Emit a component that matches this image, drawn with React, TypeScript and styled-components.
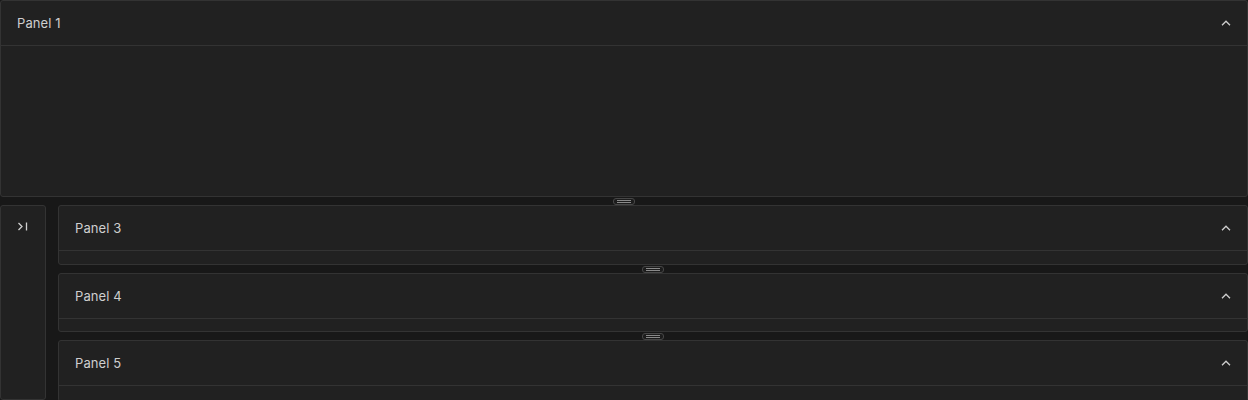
import React from "react";
import styled, { createGlobalStyle } from "styled-components";

const GlobalStyle = createGlobalStyle`
  html, body {
    margin: 0;
    padding: 0;
    background: #181818;
    font-family: Inter, "Noto Sans", sans-serif;
  }
`;

const Page = styled.div`
  width: 1248px;
  height: 400px;
  overflow: hidden;
  display: flex;
  flex-direction: column;
`;

const Panel = styled.div<{ $height: number }>`
  height: ${(p) => p.$height}px;
  flex-shrink: 0;
  box-sizing: border-box;
  background: #212121;
  border: 1px solid #333333;
  border-radius: 3px;
  overflow: hidden;
  display: flex;
  flex-direction: column;
`;

const Header = styled.div`
  height: 44px;
  flex-shrink: 0;
  display: flex;
  align-items: center;
  justify-content: space-between;
  padding: 0 16px;
  border-bottom: 1px solid #333333;
  color: #cfcfcf;
  font-size: 13px;
  letter-spacing: 0.1px;
`;

const Handle = styled.div`
  height: 8px;
  flex-shrink: 0;
  display: flex;
  align-items: center;
  justify-content: center;
`;

const Grip = styled.div`
  width: 20px;
  height: 5px;
  border: 1px solid #474747;
  border-radius: 3px;
  background: #1c1c1c;
  display: flex;
  flex-direction: column;
  justify-content: center;
  align-items: center;
  gap: 1px;

  span {
    width: 14px;
    height: 1px;
    background: #8a8a8a;
  }
`;

const Row = styled.div`
  flex: 1;
  display: flex;
  gap: 12px;
  min-height: 0;
`;

const Sidebar = styled.div`
  width: 46px;
  flex-shrink: 0;
  box-sizing: border-box;
  background: #212121;
  border: 1px solid #333333;
  border-radius: 3px;
  display: flex;
  justify-content: center;
  padding-top: 16px;
  color: #cfcfcf;
`;

const Column = styled.div`
  flex: 1;
  display: flex;
  flex-direction: column;
  min-width: 0;
`;

const Chevron = () => (
  <svg width="10" height="6" viewBox="0 0 10 6" fill="none">
    <path d="M1 5.2 L5 1.2 L9 5.2" stroke="#cfcfcf" strokeWidth="1.3" />
  </svg>
);

const ExpandIcon = () => (
  <svg width="12" height="9" viewBox="0 0 12 9" fill="none">
    <path d="M1.5 1 L5 4.5 L1.5 8" stroke="#cfcfcf" strokeWidth="1.3" />
    <path d="M9.5 0.5 V8.5" stroke="#cfcfcf" strokeWidth="1.3" />
  </svg>
);

const ResizeHandle = () => (
  <Handle>
    <Grip>
      <span />
      <span />
    </Grip>
  </Handle>
);

const PanelBox = ({ title, height }: { title: string; height: number }) => (
  <Panel $height={height}>
    <Header>
      <span>{title}</span>
      <Chevron />
    </Header>
  </Panel>
);

const App = () => {
  return (
    <>
      <GlobalStyle />
      <Page>
        <PanelBox title="Panel 1" height={197} />
        <ResizeHandle />
        <Row>
          <Sidebar>
            <ExpandIcon />
          </Sidebar>
          <Column>
            <PanelBox title="Panel 3" height={60} />
            <ResizeHandle />
            <PanelBox title="Panel 4" height={59} />
            <ResizeHandle />
            <PanelBox title="Panel 5" height={62} />
          </Column>
        </Row>
      </Page>
    </>
  );
};

export default App;
